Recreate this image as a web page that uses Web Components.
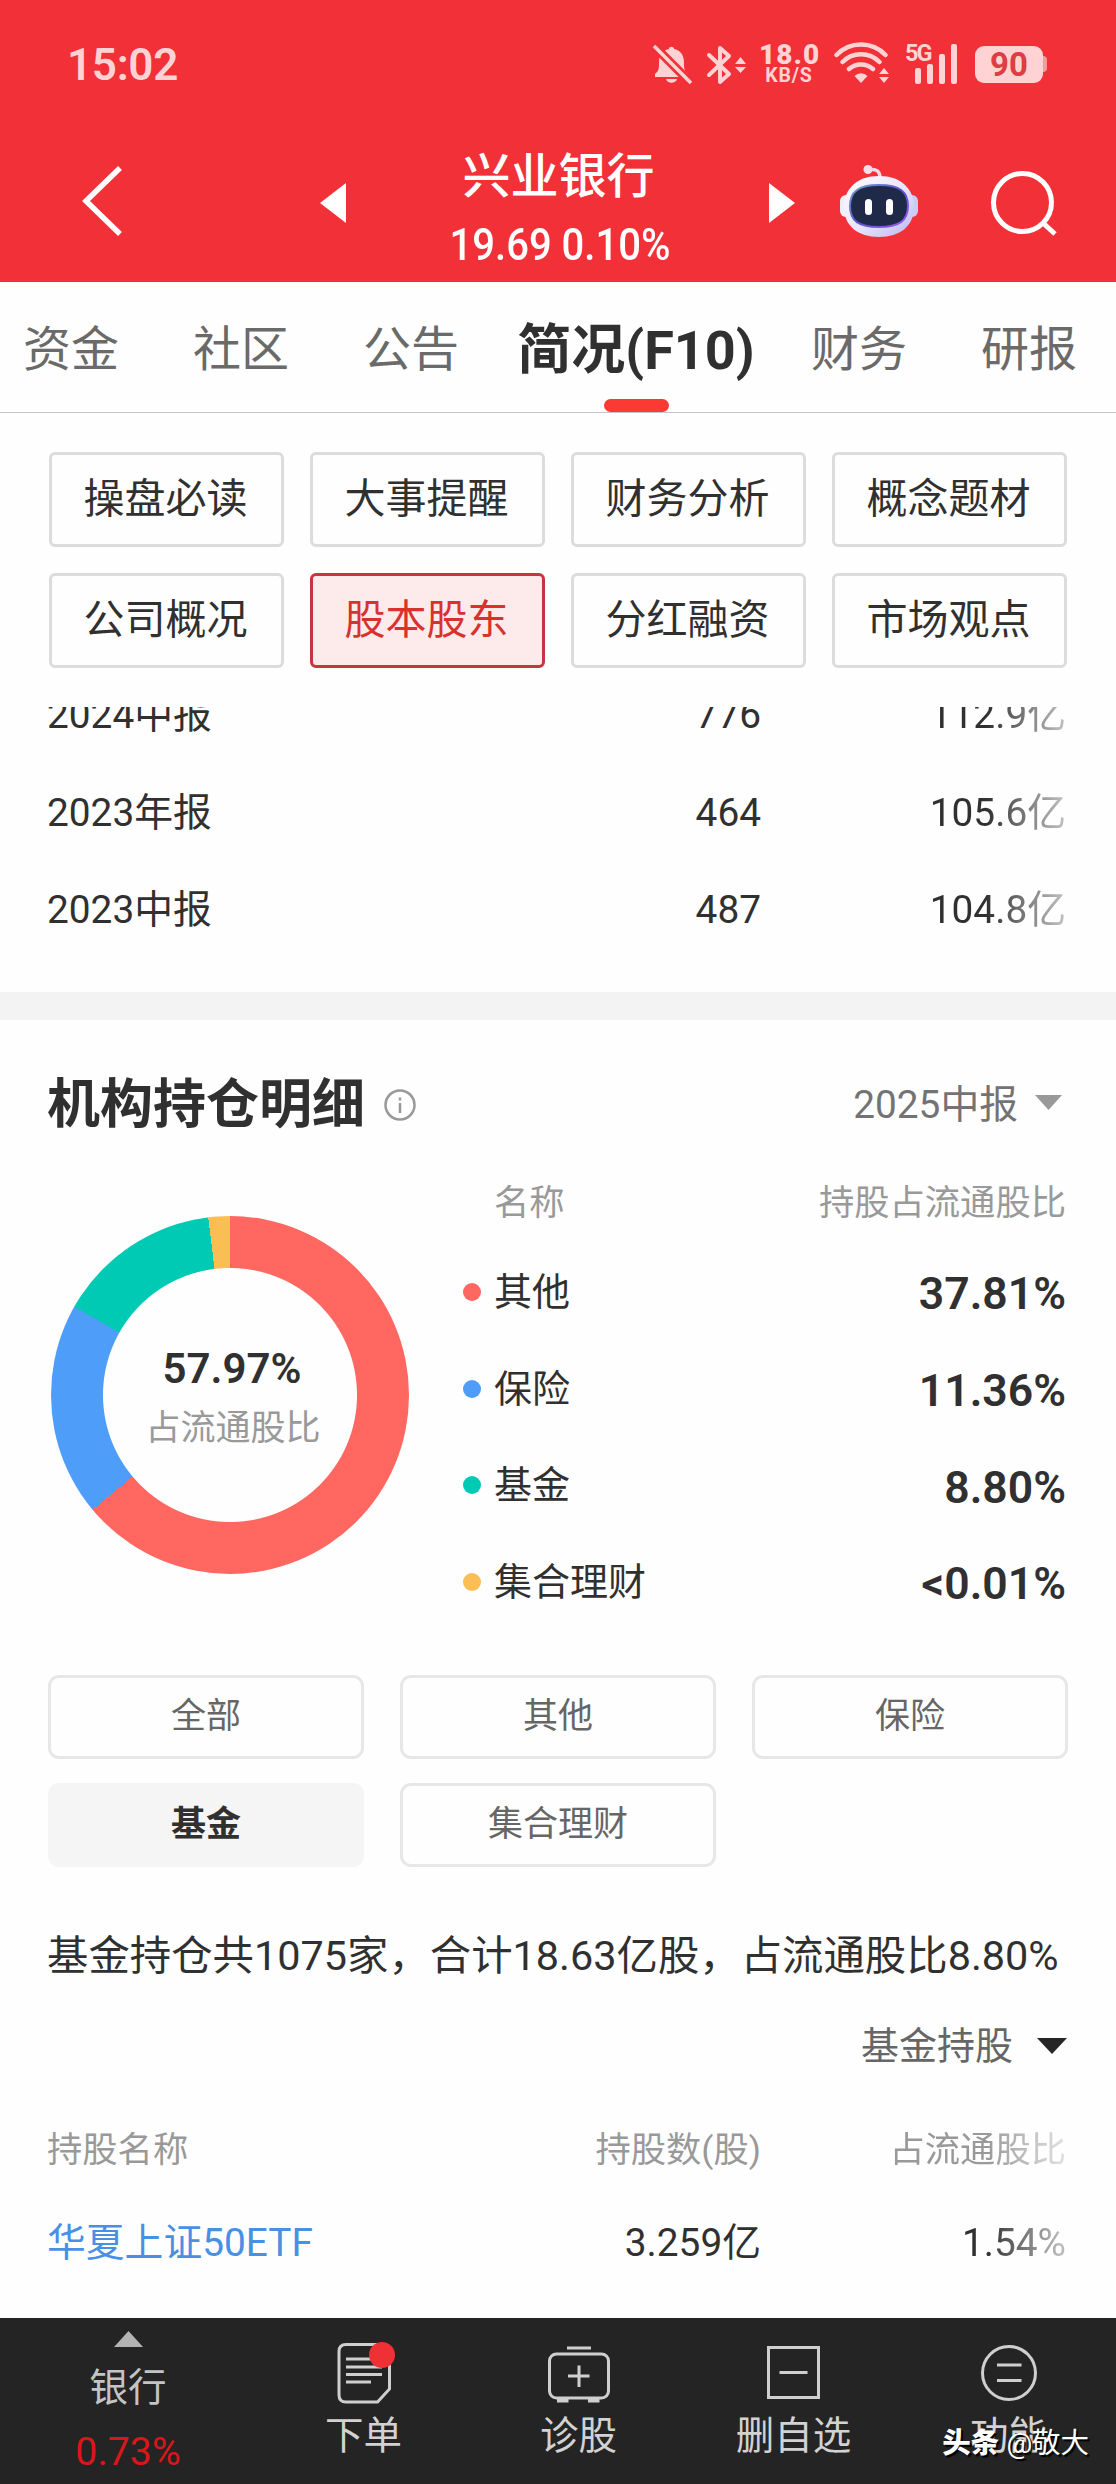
<!DOCTYPE html>
<html lang="zh-CN">
<head>
<meta charset="utf-8">
<title>兴业银行</title>
<style>
    html, body {
        margin: 0;
        padding: 0;
        background: #fefefe;
    }
    body {
        width: 1116px;
        height: 2484px;
        overflow: hidden;
        font-family: Roboto, "Noto Sans CJK SC", sans-serif;
        color: #303030;
    }
</style>
</head>
<body>

<stock-page>
    <status-bar time="15:02" battery="90"></status-bar>
    <stock-header name="兴业银行" quote="19.69 0.10%"></stock-header>
    <tab-bar>
        <tab-item>资金</tab-item>
        <tab-item>社区</tab-item>
        <tab-item>公告</tab-item>
        <tab-item active>简况(F10)</tab-item>
        <tab-item>财务</tab-item>
        <tab-item>研报</tab-item>
    </tab-bar>
    <menu-grid>
        <menu-button>操盘必读</menu-button>
        <menu-button>大事提醒</menu-button>
        <menu-button>财务分析</menu-button>
        <menu-button>概念题材</menu-button>
        <menu-button>公司概况</menu-button>
        <menu-button active>股本股东</menu-button>
        <menu-button>分红融资</menu-button>
        <menu-button>市场观点</menu-button>
    </menu-grid>
    <report-list>
        <data-row><span>2024中报</span><span slot="mid">776</span><span slot="end">112.9亿</span></data-row>
        <data-row><span>2023年报</span><span slot="mid">464</span><span slot="end">105.6亿</span></data-row>
        <data-row><span>2023中报</span><span slot="mid">487</span><span slot="end">104.8亿</span></data-row>
    </report-list>
    <section-title period="2025中报">机构持仓明细</section-title>
    <holding-chart total="57.97%" label="占流通股比">
        <legend-row color="#ff6760" value="37.81%">其他</legend-row>
        <legend-row color="#4e9ef9" value="11.36%">保险</legend-row>
        <legend-row color="#00cab4" value="8.80%">基金</legend-row>
        <legend-row color="#fbbe55" value="&lt;0.01%">集合理财</legend-row>
    </holding-chart>
    <filter-group>
        <filter-chip>全部</filter-chip>
        <filter-chip>其他</filter-chip>
        <filter-chip>保险</filter-chip>
        <filter-chip active>基金</filter-chip>
        <filter-chip>集合理财</filter-chip>
    </filter-group>
    <fund-summary sort="基金持股">基金持仓共1075家，合计18.63亿股，占流通股比8.80%</fund-summary>
    <data-row head><span>持股名称</span><span slot="mid">持股数(股)</span><span slot="end">占流通股比</span></data-row>
    <data-row link><span>华夏上证50ETF</span><span slot="mid">3.259亿</span><span slot="end">1.54%</span></data-row>
    <bottom-bar slot="bottom"></bottom-bar>
</stock-page>

<script>
// Attach an open shadow root and fill it
function render(host, html) {
    const shadowRoot = host.shadowRoot || host.attachShadow({ mode: 'open' });
    shadowRoot.innerHTML = html;
    return shadowRoot;
}

class StockPage extends HTMLElement {
    connectedCallback() {
        render(this, `
            <style>
                :host { display: flex; flex-direction: column; width: 1116px; height: 2484px; }
                main { flex: 1; min-height: 0; display: flex; flex-direction: column; overflow: hidden; }
            </style>
            <main><slot></slot></main>
            <slot name="bottom"></slot>
        `);
    }
}

class StatusBar extends HTMLElement {
    connectedCallback() {
        render(this, `
            <style>
                :host {
                    display: flex; align-items: flex-start; flex-shrink: 0;
                    box-sizing: border-box; height: 130px; padding: 40px 69px 0 67px;
                    background: #f23037; color: #ffd2d3;
                }
                .time { flex: 1; font-size: 44px; line-height: 50px; font-weight: 600; letter-spacing: -0.3px; }
                svg { display: block; fill: none; stroke: none; }
                .speed { width: 60px; margin: 4px 15px 0 11px; text-align: center; font-weight: 700; }
                .speed b { display: block; font-size: 28px; line-height: 22px; letter-spacing: 1px; }
                .speed i { display: block; font-style: normal; font-size: 19.5px; line-height: 16px; margin-top: 2px; letter-spacing: 0.8px; }
                .net { display: flex; width: 54px; margin-left: 15px; }
                .net b { font-size: 23.5px; line-height: 26px; letter-spacing: -2px; width: 10px; }
                .battery {
                    box-sizing: border-box; width: 68px; height: 37px; margin: 6px 0 0 16px; border-radius: 9px;
                    background: #ffd2d3; color: #de3d43; text-align: center;
                    font-size: 33px; line-height: 38px; font-weight: 700;
                }
                .nub { width: 4px; height: 16px; margin-top: 16px; border-radius: 0 5px 5px 0; background: #f99a9d; }
            </style>
            <span class="time">${this.getAttribute('time')}</span>
            <svg width="40" height="50" viewBox="653 40 40 50">
                <path fill="#ffd2d3" d="M656 77v-3c4-3 4-6 4-12 0-8 5-12 10-13 0-3 5-3 5 0 6 1 10 6 10 13 0 6 0 9 4 12v3zM667 79h11c-1 5-10 5-11 0z"/>
                <path stroke="#f23037" stroke-width="9" d="M655 46l37 37"/>
                <path stroke="#ffd2d3" stroke-width="3.5" d="M655 46l37 37"/>
            </svg>
            <svg width="56" height="50" viewBox="693 40 56 50">
                <path stroke="#ffd2d3" stroke-width="4" stroke-linejoin="round" stroke-linecap="round" d="M710 55l20 19-9 8V48l9 8-20 19"/>
                <path fill="#ffd2d3" d="M736 64l5.500-7 5.500 7zM736 67h11l-5.500 6z"/>
            </svg>
            <span class="speed"><b>18.0</b><i>KB/S</i></span>
            <svg width="56" height="50" viewBox="835 40 56 50">
                <g stroke="#ffd2d3" stroke-width="4.500" stroke-linecap="round">
                    <path d="M837.500 55a34 34 0 0 1 49 0M843.500 62a26 26 0 0 1 37 0M850 69a18 18 0 0 1 24 0"/>
                </g>
                <path fill="#ffd2d3" d="M855.500 76a9 9 0 0 1 13 0l-6.500 7zM880 74l5-6 5 6zM880 77h10l-5 6z"/>
            </svg>
            <span class="net">
                <b>5G</b>
                <svg width="44" height="50" viewBox="914 40 44 50">
                    <g fill="#ffd2d3">
                        <rect x="914" y="68" width="6" height="16" rx="2"/>
                        <rect x="926" y="64" width="6" height="20" rx="2"/>
                        <rect x="938" y="54" width="6" height="30" rx="2"/>
                        <rect x="950" y="44" width="6" height="40" rx="2"/>
                    </g>
                </svg>
            </span>
            <span class="battery">${this.getAttribute('battery')}</span>
            <span class="nub"></span>
        `);
    }
}

class StockHeader extends HTMLElement {
    connectedCallback() {
        render(this, `
            <style>
                :host {
                    display: flex; align-items: center; flex-shrink: 0; box-sizing: border-box;
                    height: 152px; padding-bottom: 6px; background: #f23037; color: #fff;
                }
                svg { display: block; flex-shrink: 0; }
                .back { margin: -5px 197px 0 80px; }
                .title { width: 240px; margin: 0 89px 0 94px; align-self: flex-start; padding-top: 17px; text-align: center; }
                .title b { display: block; margin-left: -3px; font-size: 48px; line-height: 60px; font-weight: 500; }
                .title span { display: block; margin: 8px -20px 0; font-size: 45px; line-height: 60px; font-weight: 500; white-space: nowrap; transform: scaleX(.89); }
                .bot { margin: -4px 70px 0 44px; }
            </style>
            <svg class="back" width="43" height="72" viewBox="0 0 43 72"><path d="M40 3L6 36l34 33" fill="none" stroke="#fff" stroke-width="5.500"/></svg>
            <svg width="26" height="40" viewBox="0 0 26 40"><path d="M26 0v40L0 20z" fill="#fff"/></svg>
            <div class="title"><b>${this.getAttribute('name')}</b><span>${this.getAttribute('quote')}</span></div>
            <svg width="26" height="40" viewBox="0 0 26 40"><path d="M0 0v40l26-20z" fill="#fff"/></svg>
            <svg class="bot" width="80" height="74" viewBox="839 164 80 74">
                <defs>
                    <linearGradient id="shell" x1="0" y1="0" x2="1" y2="1">
                        <stop offset="0" stop-color="#fff"/><stop offset=".55" stop-color="#e6e3fb"/><stop offset="1" stop-color="#b9b6f3"/>
                    </linearGradient>
                    <linearGradient id="rim" x1="0" y1="0" x2="1" y2="1">
                        <stop offset="0" stop-color="#6ea2c8"/><stop offset=".5" stop-color="#5d50cc"/><stop offset="1" stop-color="#9a5be6"/>
                    </linearGradient>
                </defs>
                <path d="M868 170c8-2 12 1 12 8" fill="none" stroke="#f3d9ea" stroke-width="3.500"/>
                <circle cx="868" cy="169.500" r="4.500" fill="#f8dcea"/>
                <rect x="840" y="195" width="12" height="22" rx="6" fill="#f1eefc"/>
                <rect x="906" y="195" width="12" height="22" rx="6" fill="#c9cdf5"/>
                <path d="M879 176c22 0 35 13 35 31 0 19-14 30-35 30s-35-11-35-30c0-18 13-31 35-31z" fill="url(#shell)"/>
                <path d="M879 185c21 0 29 7 29 21 0 15-9 21-29 21s-29-6-29-21c0-14 8-21 29-21z" fill="#1f2948" stroke="url(#rim)" stroke-width="2"/>
                <rect x="865" y="199" width="7" height="16" rx="3.500" fill="#fff"/>
                <rect x="886" y="199" width="7" height="16" rx="3.500" fill="#fff"/>
            </svg>
            <svg width="68" height="68" viewBox="990 169 68 68"><g fill="none" stroke="#fff" stroke-width="5"><circle cx="1023.500" cy="202.500" r="29"/><path d="M1043 222l13 12"/></g></svg>
        `);
    }
}

class TabBar extends HTMLElement {
    connectedCallback() {
        render(this, `
            <style>
                :host {
                    display: flex; flex-shrink: 0; gap: 74px; box-sizing: border-box;
                    height: 131px; padding: 0 0 0 23px; border-bottom: 1px solid #c6c6c6;
                }
            </style>
            <slot></slot>
        `);
    }
}

class TabItem extends HTMLElement {
    connectedCallback() {
        render(this, `
            <style>
                :host { display: flex; flex-direction: column; align-items: center; justify-content: space-between; font-size: 48px; color: #6a6a6a; white-space: nowrap; }
                :host([active]) { width: 240px; margin: 0 -19px 0 -17px; font-size: 54px; font-weight: 700; color: #303030; }
                span { line-height: 117px; padding-top: 9px; height: 108px; }
                i { width: 65px; height: 13px; border-radius: 7px; }
                :host([active]) i { background: #fb3a33; }
                :host([active]) span { padding-top: 10px; height: 107px; }
            </style>
            <span><slot></slot></span><i></i>
        `);
    }
}

class MenuGrid extends HTMLElement {
    connectedCallback() {
        render(this, `
            <style>
                :host { display: grid; flex-shrink: 0; grid-template-columns: repeat(4, 1fr); grid-auto-rows: 95px; gap: 26px; padding: 39px 49px; }
            </style>
            <slot></slot>
        `);
    }
}

class MenuButton extends HTMLElement {
    connectedCallback() {
        render(this, `
            <style>
                :host { display: flex; align-items: center; justify-content: center; border: 3px solid #dcdcdc; border-radius: 6px; font-size: 41px; line-height: 60px; }
                :host([active]) { border-color: #c4373e; background: #fdeaea; color: #d8322f; }
                div { margin: -1px 2px 0 0; }
            </style>
            <div><slot></slot></div>
        `);
    }
}

class ReportList extends HTMLElement {
    connectedCallback() {
        render(this, `
            <style>
                :host { display: flex; flex-direction: column; flex-shrink: 0; justify-content: flex-end; box-sizing: border-box; height: 313px; padding-bottom: 33px; overflow: hidden; border-bottom: 28px solid #f3f3f3; }
            </style>
            <slot></slot>
        `);
    }
}

class DataRow extends HTMLElement {
    connectedCallback() {
        render(this, `
            <style>
                :host { display: grid; flex-shrink: 0; grid-template-columns: 1fr 390px 305px; align-items: center; height: 97.5px; padding: 0 50px 0 47px; font-size: 38.800px; line-height: 60px; white-space: nowrap; }
                :host([head]) { font-size: 35.3px; color: #999; height: 88px; }
                :host([link]) .name { color: #4a90e2; }
                .mid, .end { text-align: right; }
                /* the last column fades out towards the edge */
                .end { -webkit-mask-image: linear-gradient(to right, #000 225px, rgba(0, 0, 0, .32) 300px); mask-image: linear-gradient(to right, #000 225px, rgba(0, 0, 0, .32) 300px); }
            </style>
            <div class="name"><slot></slot></div>
            <div class="mid"><slot name="mid"></slot></div>
            <div class="end"><slot name="end"></slot></div>
        `);
    }
}

class SectionTitle extends HTMLElement {
    connectedCallback() {
        render(this, `
            <style>
                :host { display: flex; flex-shrink: 0; align-items: center; height: 132px; padding: 19px 48px 0 47px; }
                h2 { margin: 0 19px 0 0; font-size: 53px; line-height: 70px; font-weight: 700; }
                .period { margin-left: auto; font-size: 38.800px; line-height: 60px; color: #737373; }
                .arrow { margin: -5px 6px 0 17px; }
                svg { display: block; }
            </style>
            <h2><slot></slot></h2>
            <svg width="32" height="34" viewBox="0 0 32 34" fill="none" stroke="#999">
                <circle cx="16" cy="17" r="14.500" stroke-width="2.500"/>
                <path d="M16 9.500v3M16 15v10" stroke-width="2.500"/>
            </svg>
            <span class="period">${this.getAttribute('period')}</span>
            <svg class="arrow" width="27" height="15"><path d="M0 0h27L13.500 15z" fill="#999"/></svg>
        `);
    }
}

class HoldingChart extends HTMLElement {
    connectedCallback() {
        render(this, `
            <style>
                :host { display: flex; flex-shrink: 0; height: 504px; padding: 0 50px 0 51px; }
                .donut {
                    display: flex; flex-direction: column; align-items: center; justify-content: center; box-sizing: border-box;
                    width: 358px; height: 358px; margin: 45px 54px 0 0; padding-top: 8px; border-radius: 50%;
                    background:
                        radial-gradient(closest-side, #fefefe 126.5px, transparent 127.5px),
                        conic-gradient(#ff6760 0 230.1deg, #4e9ef9 230.1deg 299.5deg, #00cab4 299.5deg 353deg, #fbbe55 353deg 360deg);
                }
                .donut b { font-size: 42px; line-height: 60px; font-weight: 600; padding-left: 4px; }
                .donut span { font-size: 35px; line-height: 60px; color: #999; padding-left: 6px; }
                .legend { flex: 1; }
                header { display: flex; justify-content: space-between; padding-left: 31px; font-size: 35.3px; line-height: 64px; height: 72.500px; color: #999; }
            </style>
            <div class="donut"><b>${this.getAttribute('total')}</b><span>${this.getAttribute('label')}</span></div>
            <div class="legend">
                <header><span>名称</span><span>持股占流通股比</span></header>
                <slot></slot>
            </div>
        `);
    }
}

class LegendRow extends HTMLElement {
    connectedCallback() {
        const value = this.getAttribute('value').replace('<', '&lt;');
        render(this, `
            <style>
                :host { display: flex; align-items: center; height: 96.7px; font-size: 38px; line-height: 60px; }
                i { width: 18px; height: 18px; margin-right: 13px; border-radius: 50%; background: ${this.getAttribute('color')}; }
                b { margin-left: auto; padding-top: 5px; font-size: 44.500px; font-weight: 600; }
            </style>
            <i></i><slot></slot><b>${value}</b>
        `);
    }
}

class FilterGroup extends HTMLElement {
    connectedCallback() {
        render(this, `
            <style>
                :host { display: grid; flex-shrink: 0; grid-template-columns: repeat(3, 1fr); grid-auto-rows: 84px; gap: 24px 36px; padding: 0 48px; }
            </style>
            <slot></slot>
        `);
    }
}

class FilterChip extends HTMLElement {
    connectedCallback() {
        render(this, `
            <style>
                :host { display: flex; align-items: center; justify-content: center; border: 3px solid #e7e7e7; border-radius: 11px; font-size: 35px; line-height: 60px; color: #666; }
                :host([active]) { border-color: #f5f5f5; background: #f5f5f5; color: #303030; font-weight: 700; }
            </style>
            <slot></slot>
        `);
    }
}

class FundSummary extends HTMLElement {
    connectedCallback() {
        render(this, `
            <style>
                :host { display: block; flex-shrink: 0; height: 181px; padding: 58px 49px 0 47px; }
                p { margin: 0; font-size: 41.400px; line-height: 62px; white-space: nowrap; }
                .sort { display: flex; align-items: center; justify-content: flex-end; margin-top: 29px; font-size: 38px; line-height: 60px; color: #666; }
                svg { display: block; margin-left: 24px; }
            </style>
            <p><slot></slot></p>
            <div class="sort">${this.getAttribute('sort')}<svg width="30" height="16"><path d="M0 0h30L15 16z" fill="#262626"/></svg></div>
        `);
    }
}

class BottomBar extends HTMLElement {
    connectedCallback() {
        render(this, `
            <style>
                :host { position: relative; display: flex; flex-shrink: 0; height: 166px; background: #242424; color: #d2d2d2; font-size: 38.500px; line-height: 50px; }
                div { flex: 1; display: flex; flex-direction: column; align-items: center; padding-top: 21px; }
                .index { flex: 0 0 256px; padding-top: 13px; color: #c4c4c4; }
                .index svg { margin-bottom: 16px; }
                .index b { margin-top: 14px; font-size: 39.3px; font-weight: 400; color: #d9171b; }
                div > svg { display: block; fill: none; stroke: #cfcfcf; stroke-width: 3; }
                .tool svg { margin-bottom: 2px; }
                /* account mark, lies over the last tool */
                .mark { position: absolute; right: 27px; bottom: 20px; font-size: 28.500px; line-height: 40px; color: #fff; text-shadow: 2px 2px 1px #000; white-space: nowrap; }
                .mark b { font-weight: 900; }
            </style>
            <div class="index">
                <svg width="29" height="16"><path d="M14.500 0L29 16H0z" fill="#b3b3b3" stroke="none"/></svg>
                <span>银行</span>
                <b>0.73%</b>
            </div>
            <div class="tool">
                <svg width="62" height="70" viewBox="333 2339 62 70">
                    <path d="M346 2344.500h37q6.500 0 6.500 7V2389l-12 13H346q-7 0-7-7v-43.500q0-7 7-7z"/>
                    <path d="M346 2359h32M346 2367h36M346 2374.500h36M346 2382h25"/>
                    <circle cx="382" cy="2355" r="13" fill="#ef3034" stroke="none"/>
                </svg>
                <span>下单</span>
            </div>
            <div class="tool">
                <svg width="64" height="70" viewBox="546 2339 64 70">
                    <rect x="548.500" y="2354" width="59" height="44" rx="7"/>
                    <path d="M566 2348h24M567 2376h21.500M578 2365.500v21.500"/>
                    <path d="M556 2400.500h11.500M587 2400.500h11.500" stroke-width="4"/>
                </svg>
                <span>诊股</span>
            </div>
            <div class="tool">
                <svg width="56" height="70" viewBox="765 2339 56 70"><path d="M767.500 2347.500h50v50h-50zM778.500 2372.500h28"/></svg>
                <span>删自选</span>
            </div>
            <div class="tool">
                <svg width="60" height="70" viewBox="978 2339 60 70"><circle cx="1008" cy="2373" r="26.500"/><path d="M996 2365h24.500M996 2380.500h24.500"/></svg>
                <span>功能</span>
            </div>
            <span class="mark"><b>头条</b> @敬大</span>
        `);
    }
}

// Define the custom elements
customElements.define('stock-page', StockPage);
customElements.define('status-bar', StatusBar);
customElements.define('stock-header', StockHeader);
customElements.define('tab-bar', TabBar);
customElements.define('tab-item', TabItem);
customElements.define('menu-grid', MenuGrid);
customElements.define('menu-button', MenuButton);
customElements.define('report-list', ReportList);
customElements.define('data-row', DataRow);
customElements.define('section-title', SectionTitle);
customElements.define('holding-chart', HoldingChart);
customElements.define('legend-row', LegendRow);
customElements.define('filter-group', FilterGroup);
customElements.define('filter-chip', FilterChip);
customElements.define('fund-summary', FundSummary);
customElements.define('bottom-bar', BottomBar);
</script>
</body>
</html>
